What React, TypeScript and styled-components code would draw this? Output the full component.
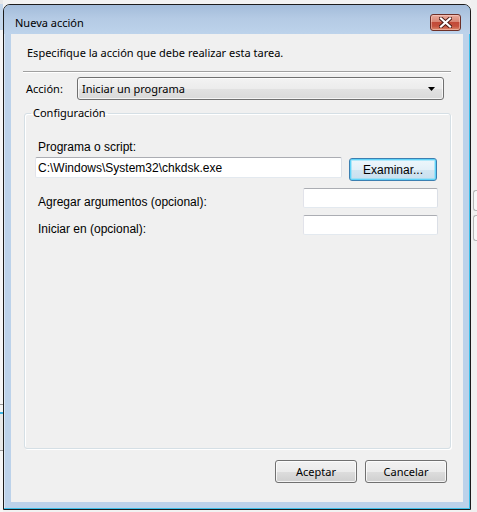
import React from "react";
import styled, { createGlobalStyle } from "styled-components";

const GlobalStyle = createGlobalStyle`
  html, body { margin: 0; padding: 0; }
  body {
    width: 477px;
    height: 512px;
    overflow: hidden;
    background: #f2f2f2;
    font-family: "Noto Sans", "Liberation Sans", sans-serif;
  }
`;

const Desktop = styled.div`
  width: 477px;
  height: 512px;
  display: flex;
  align-items: flex-start;
  overflow: hidden;
`;

const LeftStrip = styled.div`
  width: 3px;
  height: 512px;
  flex: none;
  background: linear-gradient(
    #e8e8e8 0px,
    #e8e8e8 4px,
    #c6d8ec 4px,
    #c6d8ec 30px,
    #f6f6f6 30px,
    #f6f6f6 404px,
    #9a9a9a 404px,
    #9a9a9a 405px,
    #f6f6f6 405px,
    #f6f6f6 412px,
    #3cb4e4 412px,
    #3cb4e4 414px,
    #e9e9e9 414px,
    #e9e9e9 450px,
    #9a9a9a 450px,
    #9a9a9a 451px,
    #f6f6f6 451px
  );
`;

const RightStrip = styled.div`
  flex: 1;
  height: 512px;
  background: #f0f0f0;
  display: flex;
  flex-direction: column;
  padding-top: 190px;
  box-sizing: border-box;
`;

const StubBox = styled.div<{ $h: number; $mt: number }>`
  height: ${(p) => p.$h}px;
  margin-top: ${(p) => p.$mt}px;
  margin-left: 2px;
  border: 1px solid #b5b5b5;
  border-right: none;
  border-radius: 3px 0 0 3px;
  background: #f7f7f7;
`;

const WindowWrap = styled.div`
  padding-top: 4px;
  flex: none;
`;

const Window = styled.div`
  width: 468px;
  height: 506px;
  box-sizing: border-box;
  border: 1px solid #1c1c1c;
  border-radius: 7px 7px 0 0;
  background: #bcd2ea;
  box-shadow: inset -1px -1px 0 #3cbfe9, inset 1px 1px 0 rgba(255, 255, 255, 0.45);
  display: flex;
  flex-direction: column;
  padding: 0 7px 0 7px;
`;

const TitleBar = styled.div`
  height: 29px;
  box-sizing: border-box;
  margin: 0 -7px;
  padding: 0 9px 0 11px;
  display: flex;
  align-items: flex-start;
  border-radius: 6px 6px 0 0;
  background: linear-gradient(#a3bcda 0%, #b4cae4 45%, #bdd3eb 100%);
`;

const Title = styled.span`
  font-size: 11px;
  color: #000;
  line-height: 15px;
  margin-top: 10px;
`;

const CloseButton = styled.div`
  margin-left: auto;
  margin-top: 9px;
  width: 31px;
  height: 17px;
  box-sizing: border-box;
  border: 1px solid #6e3028;
  border-radius: 3px;
  background: linear-gradient(#e9aa9c 0%, #d88674 45%, #c24a38 50%, #c5523e 75%, #dd8c6e 100%);
  box-shadow: inset 0 0 0 1px rgba(255, 220, 210, 0.45);
  display: flex;
  align-items: center;
  justify-content: center;
`;

const Client = styled.div`
  width: 452px;
  height: 468px;
  background: #f0f0f0;
  display: flex;
  flex-direction: column;
`;

const Instruction = styled.div`
  margin: 11px 0 0 16px;
  font-size: 11px;
  line-height: 15px;
  color: #000;
`;

const Separator = styled.div`
  margin: 11px 12px 0 12px;
  border-top: 1px solid #a0a0a0;
  border-bottom: 1px solid #ffffff;
`;

const ActionRow = styled.div`
  margin-top: 4px;
  padding-left: 15px;
  display: flex;
  align-items: center;
  height: 23px;
`;

const ActionLabel = styled.span`
  width: 51px;
  font-size: 11px;
  line-height: 15px;
`;

const Combo = styled.div`
  width: 367px;
  height: 23px;
  box-sizing: border-box;
  border: 1px solid #707070;
  border-radius: 3px;
  background: linear-gradient(#f3f3f3 0%, #ececec 50%, #e2e2e2 51%, #d9d9d9 100%);
  box-shadow: inset 0 0 0 1px rgba(255, 255, 255, 0.7);
  display: flex;
  align-items: center;
  padding: 0 8px 0 4px;
  font-size: 11px;
  line-height: 15px;
`;

const ComboText = styled.span`
  flex: 1;
`;

const Group = styled.fieldset`
  margin: 5px 12px 0 13px;
  height: 344px;
  box-sizing: border-box;
  border: 1px solid #d5dfe5;
  border-radius: 3px;
  box-shadow: 1px 1px 0 #ffffff, inset 1px 1px 0 #ffffff;
  padding: 0 12px 0 10px;
  min-width: 0;
`;

const Legend = styled.legend`
  margin-left: -4px;
  padding: 0 2px;
  font-size: 11px;
  line-height: 16px;
`;

const FieldLabel = styled.div<{ $mt?: number }>`
  margin-left: 3px;
  margin-top: ${(p) => p.$mt ?? 0}px;
  font-family: "Liberation Sans", Arial, sans-serif;
  font-size: 12px;
  line-height: 14px;
  color: #000;
`;

const PathRow = styled.div`
  display: flex;
  align-items: flex-start;
  gap: 7px;
  margin-top: 3px;
`;

const OptRow = styled.div`
  display: flex;
  align-items: flex-start;
  margin-top: 7px;
`;

const OptLabel = styled(FieldLabel)`
  flex: 1;
  margin-top: 8px;
  line-height: 12px;
`;

const TextBox = styled.input<{ $w: number; $h: number }>`
  width: ${(p) => p.$w}px;
  height: ${(p) => p.$h}px;
  box-sizing: border-box;
  margin: 0;
  padding: 0 2px;
  border: 1px solid;
  border-color: #abadb3 #dbdfe6 #e3e9ef #e2e3ea;
  border-radius: 2px;
  background: #ffffff;
  font-family: "Liberation Sans", Arial, sans-serif;
  font-size: 12px;
  color: #000;
  outline: none;
  flex: none;
`;

const BrowseButton = styled.div`
  margin-top: 1px;
  width: 88px;
  height: 23px;
  box-sizing: border-box;
  border: 1px solid #3c7fb1;
  border-radius: 3px;
  background: linear-gradient(#eef7fc 0%, #e3f0f8 50%, #d2e6f2 51%, #c8dfee 100%);
  box-shadow: inset 0 0 0 1px #5fd3f8, inset 0 0 0 2px rgba(120, 220, 250, 0.5);
  display: flex;
  align-items: center;
  justify-content: center;
  font-family: "Liberation Sans", Arial, sans-serif;
  font-size: 12px;
  color: #000;
  flex: none;
`;

const Footer = styled.div`
  margin-top: 11px;
  padding-right: 16px;
  display: flex;
  justify-content: flex-end;
  gap: 8px;
`;

const DialogButton = styled.div`
  width: 82px;
  height: 23px;
  box-sizing: border-box;
  border: 1px solid #707070;
  border-radius: 3px;
  background: linear-gradient(#f2f2f2 0%, #ebebeb 50%, #dddddd 51%, #cfcfcf 100%);
  box-shadow: inset 0 0 0 1px rgba(255, 255, 255, 0.75);
  display: flex;
  align-items: center;
  justify-content: center;
  font-size: 11px;
  line-height: 15px;
  color: #000;
`;

const CloseGlyph = () => (
  <svg width="13" height="11" viewBox="0 0 13 11">
    <path d="M2 1.5 L11 9.5 M11 1.5 L2 9.5" stroke="#4a1a14" strokeWidth="4" strokeLinecap="square" />
    <path d="M2 1.5 L11 9.5 M11 1.5 L2 9.5" stroke="#ffffff" strokeWidth="2.2" strokeLinecap="square" />
  </svg>
);

const ComboArrow = () => (
  <svg width="7" height="4" viewBox="0 0 7 4">
    <path d="M0 0 H7 L3.5 4 Z" fill="#000" />
  </svg>
);

export default function App() {
  return (
    <>
      <GlobalStyle />
      <Desktop>
        <LeftStrip />
        <WindowWrap>
          <Window>
            <TitleBar>
              <Title>Nueva acción</Title>
              <CloseButton>
                <CloseGlyph />
              </CloseButton>
            </TitleBar>
            <Client>
              <Instruction>Especifique la acción que debe realizar esta tarea.</Instruction>
              <Separator />
              <ActionRow>
                <ActionLabel>Acción:</ActionLabel>
                <Combo>
                  <ComboText>Iniciar un programa</ComboText>
                  <ComboArrow />
                </Combo>
              </ActionRow>
              <Group>
                <Legend>Configuración</Legend>
                <FieldLabel $mt={19}>Programa o script:</FieldLabel>
                <PathRow>
                  <TextBox $w={307} $h={21} defaultValue="C:\Windows\System32\chkdsk.exe" readOnly />
                  <BrowseButton>Examinar...</BrowseButton>
                </PathRow>
                <OptRow>
                  <OptLabel>Agregar argumentos (opcional):</OptLabel>
                  <TextBox $w={135} $h={20} readOnly />
                </OptRow>
                <OptRow>
                  <OptLabel>Iniciar en (opcional):</OptLabel>
                  <TextBox $w={135} $h={20} readOnly />
                </OptRow>
              </Group>
              <Footer>
                <DialogButton>Aceptar</DialogButton>
                <DialogButton>Cancelar</DialogButton>
              </Footer>
            </Client>
          </Window>
        </WindowWrap>
        <RightStrip>
          <StubBox $h={19} $mt={0} />
          <StubBox $h={24} $mt={4} />
        </RightStrip>
      </Desktop>
    </>
  );
}
